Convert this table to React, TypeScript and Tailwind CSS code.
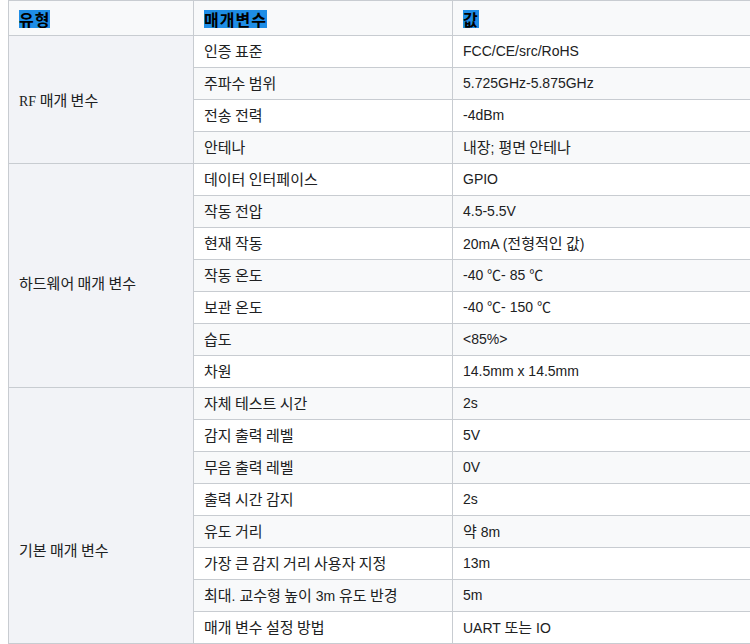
import React from "react";

type Group = { name: string; pt: string; rows: [string, string][] };

const groups: Group[] = [
  {
    name: "RF 매개 변수",
    pt: "pt-[2px]",
    rows: [
      ["인증 표준", "FCC/CE/src/RoHS"],
      ["주파수 범위", "5.725GHz-5.875GHz"],
      ["전송 전력", "-4dBm"],
      ["안테나", "내장; 평면 안테나"],
    ],
  },
  {
    name: "하드웨어 매개 변수",
    pt: "pt-[16px]",
    rows: [
      ["데이터 인터페이스", "GPIO"],
      ["작동 전압", "4.5-5.5V"],
      ["현재 작동", "20mA (전형적인 값)"],
      ["작동 온도", "-40 ℃- 85 ℃"],
      ["보관 온도", "-40 ℃- 150 ℃"],
      ["습도", "<85%>"],
      ["차원", "14.5mm x 14.5mm"],
    ],
  },
  {
    name: "기본 매개 변수",
    pt: "pt-[70px]",
    rows: [
      ["자체 테스트 시간", "2s"],
      ["감지 출력 레벨", "5V"],
      ["무음 출력 레벨", "0V"],
      ["출력 시간 감지", "2s"],
      ["유도 거리", "약 8m"],
      ["가장 큰 감지 거리 사용자 지정", "13m"],
      ["최대. 교수형 높이 3m 유도 반경", "5m"],
      ["매개 변수 설정 방법", "UART 또는 IO"],
    ],
  },
];

function K({ text }: { text: string }) {
  const parts = text.split(/([\uAC00-\uD7A3]+(?:\s+[\uAC00-\uD7A3]+)*)/);
  return (
    <>
      {parts.map((p, i) =>
        /[\uAC00-\uD7A3]/.test(p) ? (
          <span key={i} className="text-[15px]" style={{ fontFamily: '"Noto Sans CJK KR", sans-serif' }}>
            {p}
          </span>
        ) : (
          <React.Fragment key={i}>{p}</React.Fragment>
        )
      )}
    </>
  );
}

export default function App() {
  let idx = 0;
  return (
    <div className="w-[750px] h-[644px] overflow-hidden bg-white">
      <table
        className="ml-[8px] border-collapse text-[14px] text-[#202122] table-fixed w-[900px]"
        style={{ fontFamily: '"Liberation Sans", Arial, "Noto Sans CJK KR", sans-serif' }}
      >
        <colgroup>
          <col className="w-[185px]" />
          <col className="w-[259px]" />
          <col className="w-[456px]" />
        </colgroup>
        <thead>
          <tr className="h-[35px] bg-[#f8f9fa]">
            {["유형", "매개변수", "값"].map((h) => (
              <th
                key={h}
                className="border border-[#c8ccd1] px-[10px] text-left align-middle font-bold"
              >
                <span
                  className="inline-block h-[18px] leading-[18px] bg-[#1e8de6] text-black text-[16px] tracking-[1px] align-middle"
                  style={{ fontFamily: '"Noto Sans CJK KR", sans-serif' }}
                >
                  {h}
                </span>
              </th>
            ))}
          </tr>
        </thead>
        <tbody>
          {groups.map((g) =>
            g.rows.map((r, i) => {
              idx += 1;
              const gray = idx % 2 === 0;
              return (
                <tr key={g.name + i} className={`h-[32px] ${gray ? "bg-[#f8f9fa]" : "bg-white"}`}>
                  {i === 0 && (
                    <td
                      rowSpan={g.rows.length}
                      className={`border border-[#c8ccd1] bg-[#f2f3f7] px-[10px] align-middle ${g.pt}`}
                      style={{ fontFamily: '"Liberation Serif", "Noto Sans CJK KR", serif' }}
                    >
                      <K text={g.name} />
                    </td>
                  )}
                  <td className="border border-[#c8ccd1] px-[10px] align-middle whitespace-nowrap overflow-hidden">
                    <K text={r[0]} />
                  </td>
                  <td className="border border-[#c8ccd1] px-[10px] align-middle whitespace-nowrap">
                    <K text={r[1]} />
                  </td>
                </tr>
              );
            })
          )}
        </tbody>
      </table>
    </div>
  );
}
